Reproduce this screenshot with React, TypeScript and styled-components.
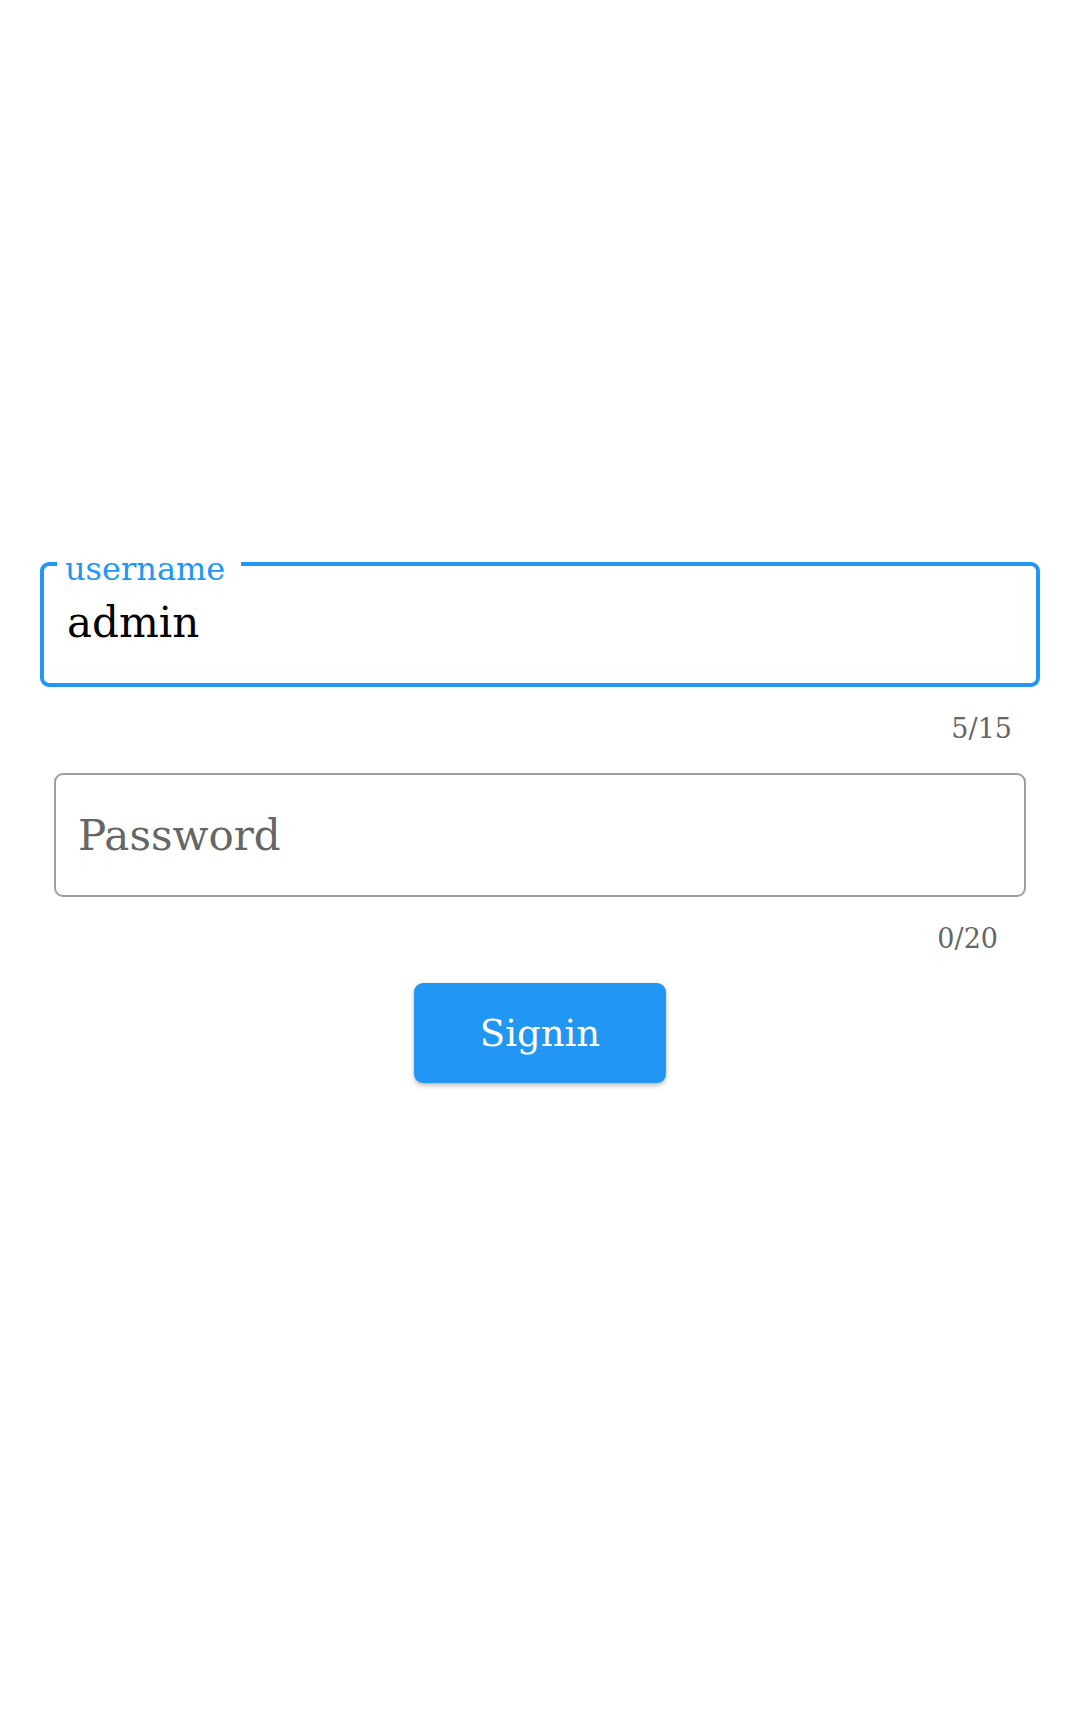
import { useState } from "react";
import styled, { createGlobalStyle } from "styled-components";

const GlobalStyle = createGlobalStyle`
  html, body {
    margin: 0;
    padding: 0;
    background: #fff;
  }
  body {
    font-family: "DejaVu Serif", "Liberation Serif", serif;
  }
`;

const primary = "#2196f3";

const Page = styled.div`
  min-height: 1713px;
  display: flex;
  flex-direction: column;
  padding-top: 562px;
  box-sizing: border-box;
`;

const Form = styled.form`
  display: flex;
  flex-direction: column;
`;

// campo com borda e contador
const Field = styled.div<{ focused: boolean }>`
  display: flex;
  flex-direction: column;
  margin: 0 ${({ focused }) => (focused ? "40px" : "54px")};
`;

const Box = styled.div<{ focused: boolean }>`
  position: relative;
  box-sizing: border-box;
  height: ${({ focused }) => (focused ? "125px" : "124px")};
  border: ${({ focused }) => (focused ? `4px solid ${primary}` : "2px solid #9e9e9e")};
  border-radius: 9px;
  display: flex;
  align-items: ${({ focused }) => (focused ? "flex-start" : "center")};
`;

const Label = styled.span`
  position: absolute;
  top: -12px;
  left: 13px;
  padding: 0 16px 0 8px;
  background: #fff;
  color: ${primary};
  font-size: 32px;
  line-height: 30px;
`;

const Input = styled.input<{ focused: boolean }>`
  border: none;
  outline: none;
  background: transparent;
  width: 100%;
  font-family: inherit;
  font-size: 42px;
  color: #000;
  padding: ${({ focused }) => (focused ? "32px 0 0 23px" : "0 0 0 22px")};

  &::placeholder {
    color: #666;
    opacity: 1;
  }
`;

const Counter = styled.div`
  align-self: flex-end;
  color: #666;
  font-size: 27px;
  margin-top: 26px;
  margin-bottom: 29px;
  padding-right: 28px;
`;

const ButtonRow = styled.div`
  display: flex;
  justify-content: center;
`;

const Button = styled.button`
  width: 252px;
  height: 100px;
  border: none;
  border-radius: 9px;
  background: ${primary};
  color: #fff;
  font-family: inherit;
  font-size: 37px;
  box-shadow: 0 3px 5px rgba(0, 0, 0, 0.2), 0 1px 3px rgba(0, 0, 0, 0.12);
  cursor: pointer;
`;

export default function App() {
  const [username, setUsername] = useState("admin");
  const [password, setPassword] = useState("");

  return (
    <>
      <GlobalStyle />
      <Page>
        <Form onSubmit={(e) => e.preventDefault()}>
          <Field focused>
            <Box focused>
              <Label>username</Label>
              <Input
                focused
                value={username}
                maxLength={15}
                onChange={(e) => setUsername(e.target.value)}
              />
            </Box>
            <Counter>{username.length}/15</Counter>
          </Field>

          <Field focused={false}>
            <Box focused={false}>
              <Input
                focused={false}
                type="password"
                placeholder="Password"
                value={password}
                maxLength={20}
                onChange={(e) => setPassword(e.target.value)}
              />
            </Box>
            <Counter>{password.length}/20</Counter>
          </Field>

          <ButtonRow>
            <Button type="submit">Signin</Button>
          </ButtonRow>
        </Form>
      </Page>
    </>
  );
}
